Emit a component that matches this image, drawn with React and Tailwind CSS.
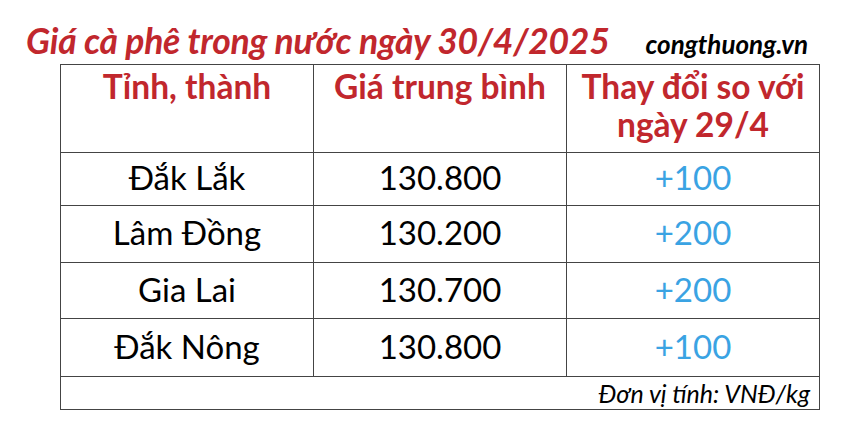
export default function App() {
  const font = { fontFamily: 'Lato, "Liberation Sans", sans-serif' };
  const rows = [
    ["Đắk Lắk", "130.800", "+100", "h-[53px]"],
    ["Lâm Đồng", "130.200", "+200", "h-[57px]"],
    ["Gia Lai", "130.700", "+200", "h-[56px]"],
    ["Đắk Nông", "130.800", "+100", "h-[58px]"],
  ];
  return (
    <div className="w-[851px] h-[423px] bg-white overflow-hidden" style={font}>
      <div className="flex items-baseline h-[64px] pl-[26px] pt-[20px]">
        <div className="text-[35.5px] leading-[42px] font-bold italic text-[#c1272d] tracking-[-0.25px]">
          Giá cà phê trong nước ngày 30/4/2025
        </div>
        <div className="ml-[36px] text-[26px] leading-[30px] font-bold italic text-black">
          congthuong.vn
        </div>
      </div>
      <table className="ml-[60px] w-[759px] border-collapse table-fixed">
        <thead>
          <tr className="h-[88px] align-top">
            <th className="w-[253px] border border-[#444] pt-[2px] text-[33.5px] leading-[38px] font-bold text-[#c1272d]">Tỉnh, thành</th>
            <th className="w-[253px] border border-[#444] pt-[2px] text-[33.5px] leading-[38px] font-bold text-[#c1272d]">Giá trung bình</th>
            <th className="w-[253px] border border-[#444] pt-[2px] text-[33.5px] leading-[38px] font-bold text-[#c1272d]">Thay đổi so với<br />ngày 29/4</th>
          </tr>
        </thead>
        <tbody>
          {rows.map(([a, b, c, h]) => (
            <tr key={a} className={h}>
              <td className="border border-[#444] text-center text-[33px] leading-[40px] text-black pb-[4px]">{a}</td>
              <td className="border border-[#444] text-center text-[33px] leading-[40px] text-black pb-[4px]">{b}</td>
              <td className="border border-[#444] text-center text-[33px] leading-[40px] text-[#3aa3e3] pb-[4px]">{c}</td>
            </tr>
          ))}
          <tr className="h-[33px]">
            <td colSpan={3} className="border border-[#444] text-right pr-[9px] text-[25px] leading-[30px] italic text-black">
              Đơn vị tính: VNĐ/kg
            </td>
          </tr>
        </tbody>
      </table>
    </div>
  );
}
